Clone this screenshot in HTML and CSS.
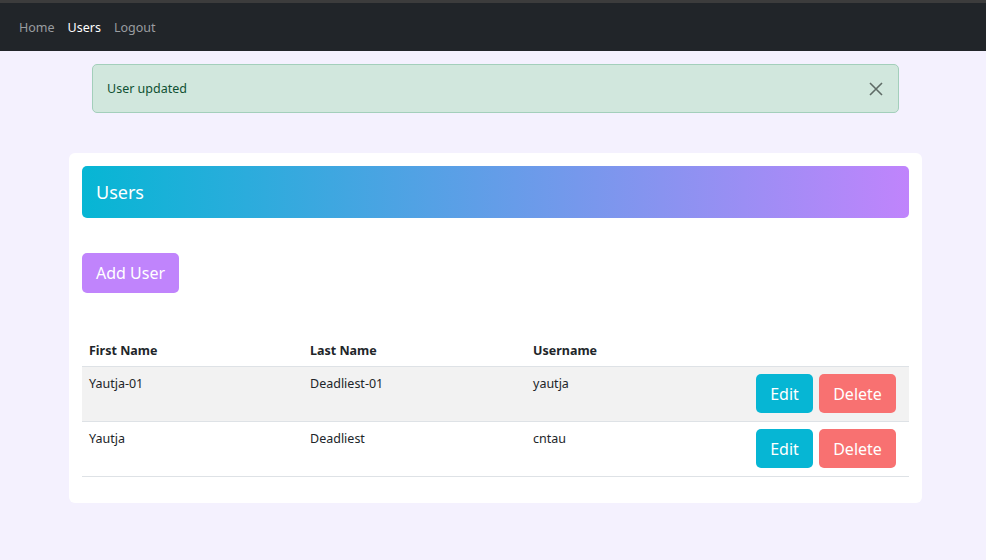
FILE: index.html
```html
<!DOCTYPE html>
<html>
<head>
<meta charset="utf-8">
<link rel="stylesheet" href="styles.css">
</head>
<body>
<div class="topline"></div>
<nav class="navbar">
  <a class="nav-link" href="#">Home</a>
  <a class="nav-link active" href="#">Users</a>
  <a class="nav-link" href="#">Logout</a>
</nav>
<main class="page">
  <div class="alert">
    <span>User updated</span>
    <button class="close" aria-label="Close">
      <svg width="16" height="16" viewBox="0 0 16 16"><path d="M2 2L14 14M14 2L2 14" stroke="#5f6b66" stroke-width="1.6" fill="none"/></svg>
    </button>
  </div>
  <section class="card">
    <div class="card-header">Users</div>
    <button class="btn btn-add">Add User</button>
    <table class="table">
      <thead>
        <tr><th class="c1">First Name</th><th class="c2">Last Name</th><th>Username</th><th></th></tr>
      </thead>
      <tbody>
        <tr class="striped">
          <td>Yautja-01</td><td>Deadliest-01</td><td>yautja</td>
          <td class="actions"><button class="btn btn-edit">Edit</button><button class="btn btn-delete">Delete</button></td>
        </tr>
        <tr>
          <td>Yautja</td><td>Deadliest</td><td>cntau</td>
          <td class="actions"><button class="btn btn-edit">Edit</button><button class="btn btn-delete">Delete</button></td>
        </tr>
      </tbody>
    </table>
  </section>
</main>
</body>
</html>
```
FILE: styles.css
```css
* { box-sizing: border-box; }
html, body { margin: 0; }
body {
  background: #f4f1fe;
  font-family: "Noto Sans", "Open Sans", sans-serif;
  font-size: 12.5px;
  color: #212529;
  height: 560px;
  overflow: hidden;
}
.topline { height: 3px; background: #3c3c3c; }
.navbar {
  background: #212529;
  height: 48px;
  display: flex;
  align-items: center;
  padding-left: 19px;
  gap: 13px;
}
.nav-link {
  color: #9a9da0;
  text-decoration: none;
  font-size: 12.5px;
}
.nav-link.active { color: #ffffff; }
.page { padding: 13px 0 0; }
.alert {
  margin: 0 87px 0 92px;
  height: 49px;
  background: #d1e7dd;
  border: 1px solid #a3cfbb;
  border-radius: 5px;
  color: #0f5132;
  display: flex;
  align-items: center;
  justify-content: space-between;
  padding: 0 10px 0 14px;
}
.close {
  background: none;
  border: 0;
  padding: 0;
  width: 24px;
  height: 24px;
  display: flex;
  align-items: center;
  justify-content: center;
}
.card {
  margin: 40px 64px 0 69px;
  background: #fff;
  border-radius: 6px;
  padding: 13px 13px 26px;
}
.card-header {
  height: 52px;
  border-radius: 5px;
  background: linear-gradient(90deg, #06b6d4 0%, #c084fc 100%);
  color: #fff;
  font-size: 18px;
  display: flex;
  align-items: center;
  padding-left: 14px;
}
.btn {
  border: 0;
  border-radius: 5px;
  color: #fff;
  font-family: inherit;
  font-size: 16px;
  height: 40px;
  padding: 0;
  white-space: nowrap;
  cursor: pointer;
}
.btn-add {
  margin-top: 35px;
  background: #c084fc;
  width: 97px;
}
.table {
  width: 100%;
  border-collapse: collapse;
  margin-top: 41px;
}
.table th {
  text-align: left;
  font-weight: 700;
  padding: 8px 7px 7px;
  border-bottom: 1px solid #dee2e6;
}
.c1 { width: 221px; }
.c2 { width: 223px; }
.table td {
  vertical-align: top;
  padding: 8px 7px;
  height: 55px;
  border-bottom: 1px solid #dee2e6;
}
.striped td { background: #f2f2f2; }
.table td.actions {
  text-align: right;
  padding: 7px 13px 7px 7px;
  white-space: nowrap;
}
.btn-edit { background: #06b6d4; width: 57px; height: 39px; }
.btn-delete { background: #f87171; width: 77px; height: 39px; margin-left: 6px; }
```
